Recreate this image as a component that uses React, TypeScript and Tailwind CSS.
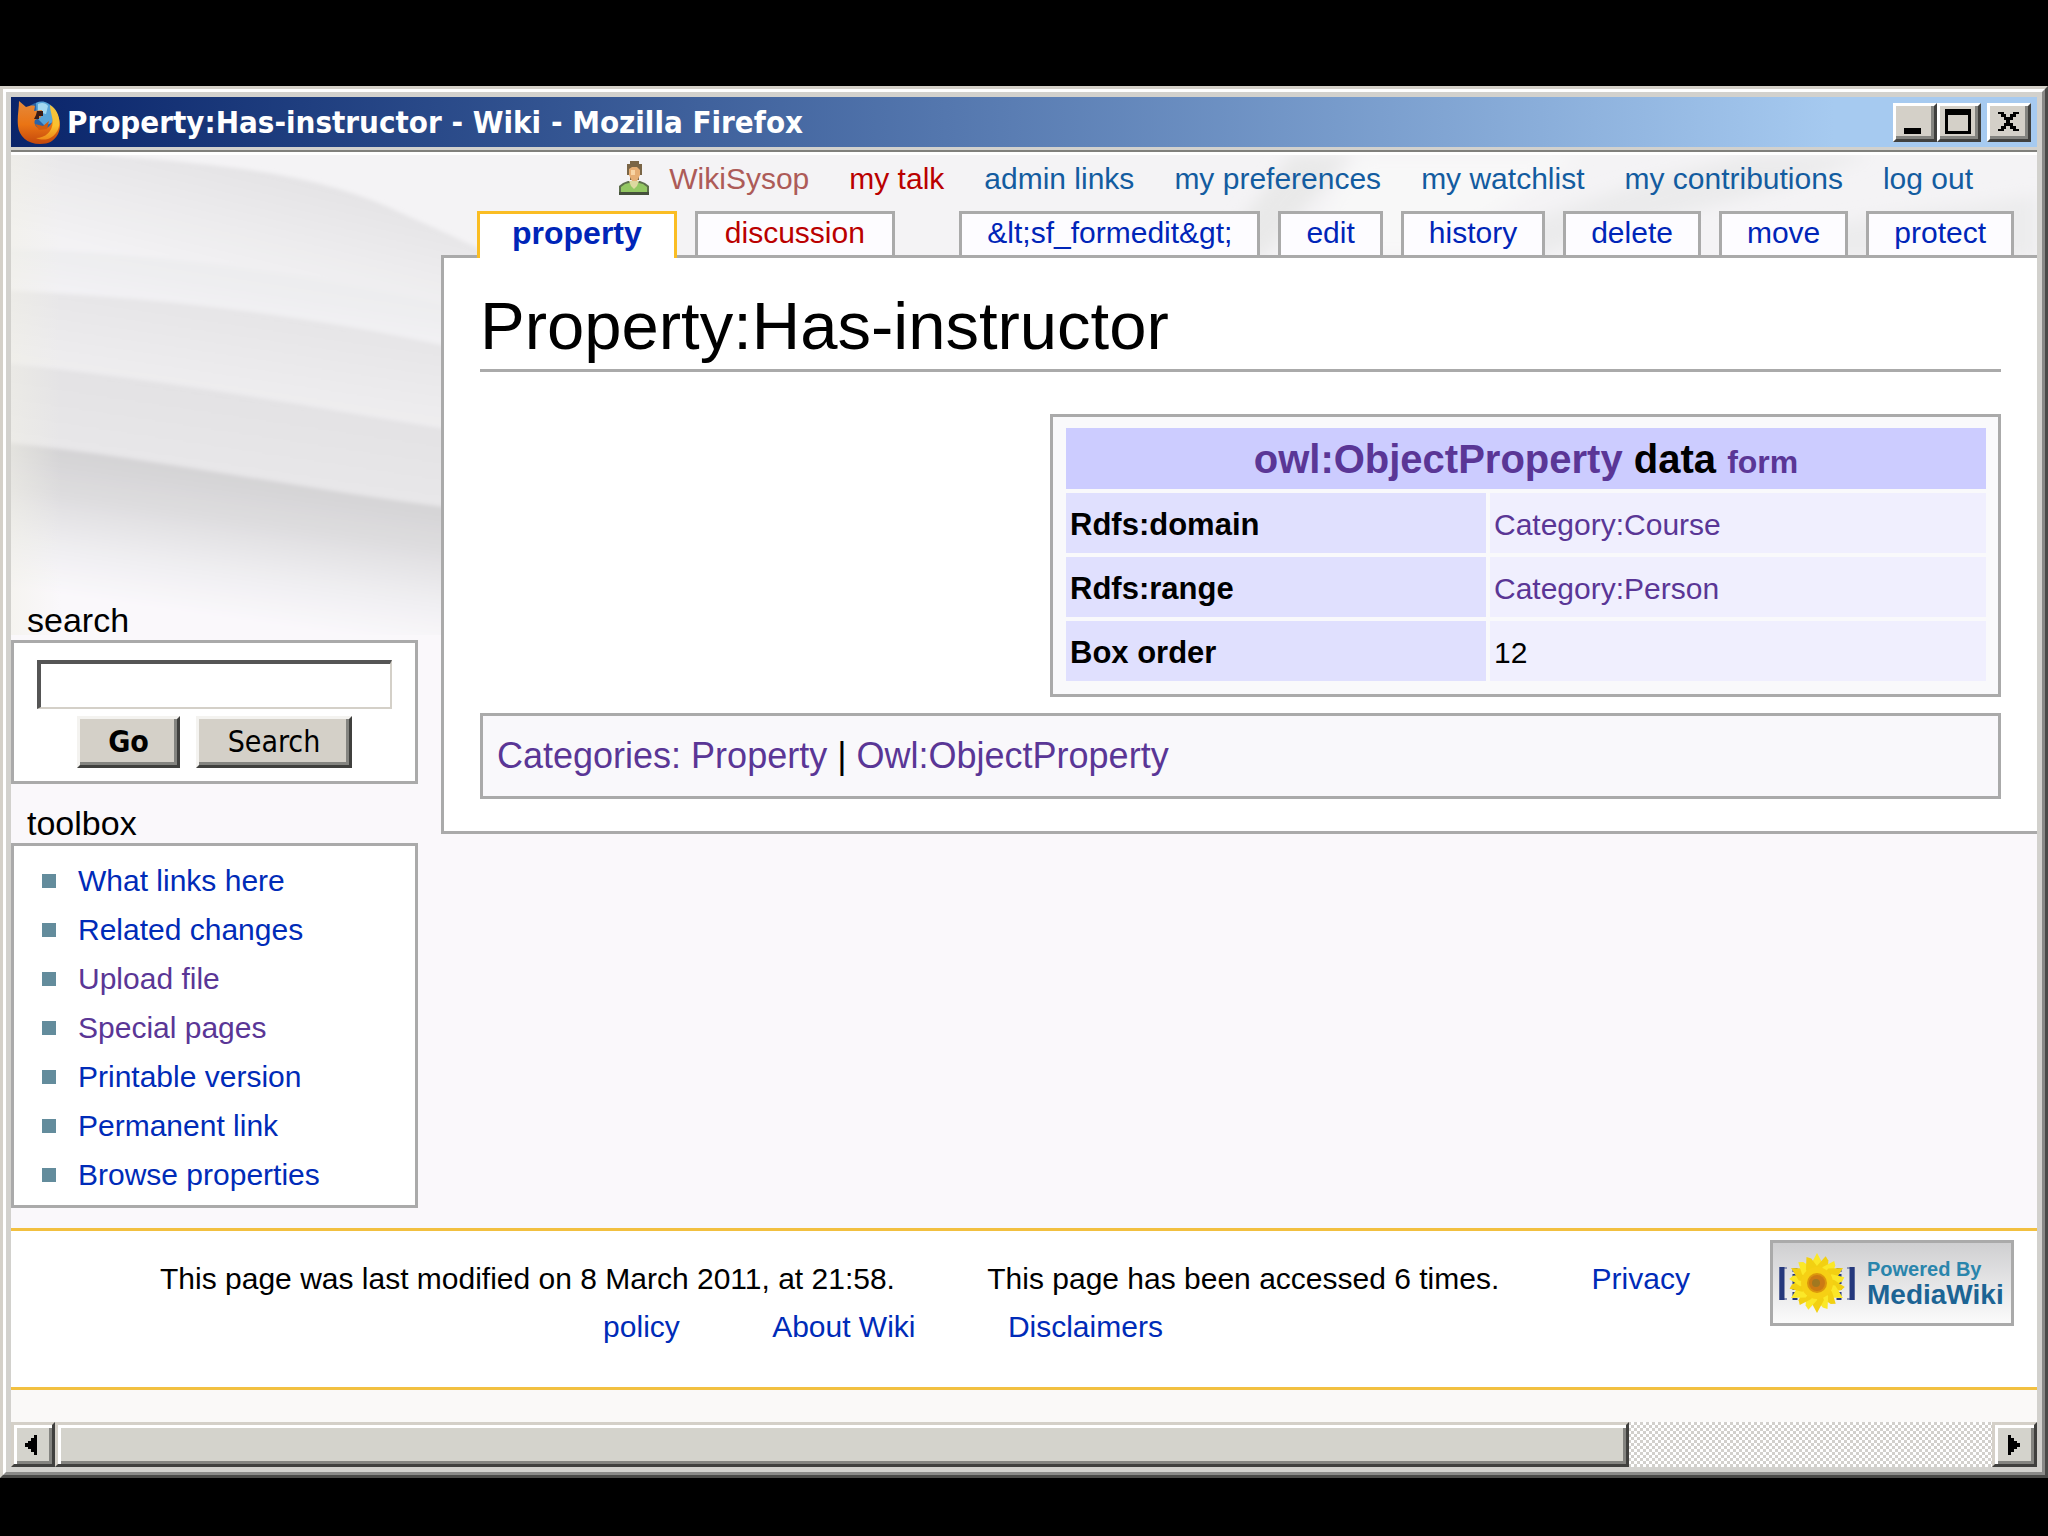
import type { ReactNode } from "react";

const TOOLS = [
  { label: "What links here" },
  { label: "Related changes" },
  { label: "Upload file", visited: true },
  { label: "Special pages", visited: true },
  { label: "Printable version" },
  { label: "Permanent link" },
  { label: "Browse properties" },
];

const ACTIONS = ["&lt;sf_formedit&gt;", "edit", "history", "delete", "move", "protect"];

const PERSONAL = ["admin links", "my preferences", "my watchlist", "my contributions", "log out"];

const ROWS = [
  { name: "Rdfs:domain", value: "Category:Course", link: true },
  { name: "Rdfs:range", value: "Category:Person", link: true },
  { name: "Box order", value: "12", link: false },
];

function FirefoxIcon() {
  return (
    <svg viewBox="0 0 44 44" className="h-11 w-11 shrink-0" aria-hidden="true">
      <defs>
        <linearGradient id="fox" x1="0" y1="0" x2="0" y2="1">
          <stop offset="0" stopColor="#e58a3c" />
          <stop offset="0.55" stopColor="#ea7414" />
          <stop offset="1" stopColor="#c4480c" />
        </linearGradient>
        <linearGradient id="flame" x1="0" y1="0" x2="0" y2="1">
          <stop offset="0" stopColor="#f2c440" />
          <stop offset="0.6" stopColor="#fbc02e" />
          <stop offset="1" stopColor="#ee8a18" />
        </linearGradient>
      </defs>
      <circle cx="24" cy="19" r="17" fill="#2a64a8" />
      <path d="M19 3c6-3 13-1 16 5l1 14-8 4-8-8z" fill="#58a4d8" />
      <path d="M21 4c4-2 8-1 10 2l-2 8-8-2z" fill="#a4d8f0" />
      <path
        d="M2 1l7 6c3-1 6-2 9-1l-1 5 8-1-1 7-6 3c-2 4 2 9 7 9 8 0 13-7 11-19 7 5 9 16 5 24-4 7-9 10-18 10C10 44 2 36 1 26 0 17 2 9 2 1z"
        fill="url(#fox)"
      />
      <path d="M33 5c10 6 12 20 6 28-5 7-13 8-20 5 11 0 19-9 16-21-1-5-2-8-2-12z" fill="url(#flame)" />
      <path d="M20 11h6v5h-4v3h-5l2-4z" fill="#3a1c18" />
      <path d="M18 24l8 2 6-5-2 8-8 1z" fill="#d05c10" />
    </svg>
  );
}

function UserIcon() {
  return (
    <svg viewBox="0 0 30 34" className="h-[34px] w-[30px]" aria-hidden="true">
      <path d="M0 34v-9l4-3 5-2h12l5 2 4 3v9z" fill="#5d6f4c" />
      <path d="M2 31v-5l4-3 4-1h10l4 1 4 3v5z" fill="#93c763" />
      <path d="M0 31h30v3H0z" fill="#45503c" />
      <path d="M10 20h10l-2 5-3 3-3-3z" fill="#dcd9a0" />
      <path d="M8 3h3V0h9v3h3v11h-3v5h-9v-5H8z" fill="#7a6546" />
      <path d="M10 8l3-2h5l3 3v5l-3 6h-5l-3-6z" fill="#e6ae74" />
      <path d="M12 9h4v5h-4z" fill="#f8d4a4" />
    </svg>
  );
}

function Sunflower() {
  const petals = Array.from({ length: 18 }, (_, i) => i * 20);
  return (
    <svg viewBox="0 0 80 60" className="h-15 w-20 shrink-0" aria-hidden="true">
      <path d="M10 15H3v31h7M70 15h7v31h-7" fill="none" stroke="#8e96b8" strokeWidth="2" />
      <path d="M5 14v33M75 14v33" fill="none" stroke="#25387c" strokeWidth="5" />
      <path d="M18 15v32M62 15v32" fill="none" stroke="#25387c" strokeWidth="5" strokeDasharray="4 2" />
      {petals.map((deg, i) => (
        <path
          key={deg}
          d={i % 3 ? "M40 30L34 14l5-12 4 3 3 10z" : "M40 30L33 13l7-13 7 13z"}
          fill={i % 2 ? "#f2d012" : "#fbe828"}
          transform={`rotate(${deg} 40 30)`}
        />
      ))}
      <circle cx="40" cy="30" r="16" fill="#f6d014" />
      <circle cx="40" cy="30" r="10" fill="#dc960c" />
      <circle cx="40" cy="30" r="8" fill="#cc7a14" />
      <circle cx="39" cy="30" r="4" fill="#a07820" />
    </svg>
  );
}

/** Soft paper folds behind the header and sidebar. */
function Backdrop() {
  return (
    <svg viewBox="0 0 2026 480" preserveAspectRatio="none" className="absolute top-0 left-0 h-[480px] w-full" aria-hidden="true">
      <defs>
        <linearGradient id="fold1" gradientUnits="userSpaceOnUse" x1="250" y1="20" x2="225" y2="125">
          <stop offset="0" stopColor="#e5e4e6" />
          <stop offset="1" stopColor="#f3f2f4" />
        </linearGradient>
        <linearGradient id="fold2" gradientUnits="userSpaceOnUse" x1="215" y1="120" x2="208" y2="165">
          <stop offset="0" stopColor="#ededef" />
          <stop offset="1" stopColor="#f3f2f5" />
        </linearGradient>
        <linearGradient id="fold3" gradientUnits="userSpaceOnUse" x1="215" y1="156" x2="203" y2="236">
          <stop offset="0" stopColor="#e6e5e7" />
          <stop offset="1" stopColor="#eeedef" />
        </linearGradient>
        <linearGradient id="fold4" gradientUnits="userSpaceOnUse" x1="215" y1="239" x2="203" y2="319">
          <stop offset="0" stopColor="#e3e2e4" />
          <stop offset="1" stopColor="#e8e7e9" />
        </linearGradient>
        <linearGradient id="fold5" gradientUnits="userSpaceOnUse" x1="215" y1="318" x2="195" y2="460">
          <stop offset="0" stopColor="#d4d3d5" />
          <stop offset="0.3" stopColor="#dddcde" />
          <stop offset="0.7" stopColor="#f0eff2" />
          <stop offset="1" stopColor="#faf8fb" />
        </linearGradient>
        <linearGradient id="edge" x1="0" y1="0" x2="1" y2="0">
          <stop offset="0" stopColor="#f1f0e6" stopOpacity="0.5" />
          <stop offset="1" stopColor="#f1f0e6" stopOpacity="0" />
        </linearGradient>
        <filter id="soft">
          <feGaussianBlur stdDeviation="2" />
        </filter>
        <filter id="softer">
          <feGaussianBlur stdDeviation="8" />
        </filter>
      </defs>
      <rect width="2026" height="104" fill="#f4f3f5" />
      <g filter="url(#soft)">
        <path d="M-10 -8C180 8 290 10 390 58C425 74 450 84 480 100V160H-10z" fill="url(#fold1)" />
        <path d="M-10 94C140 98 290 116 440 150V220H-10z" fill="url(#fold2)" />
        <path d="M-10 135C140 142 290 158 440 192V300H-10z" fill="url(#fold3)" />
        <path d="M-10 208C140 222 290 250 440 275V380H-10z" fill="url(#fold4)" />
        <path d="M-10 287C140 302 290 334 440 353V490H-10z" fill="url(#fold5)" />
      </g>
      <g filter="url(#softer)">
        <path d="M1280 0h60l-90 104h-50z" fill="#e9e9e9" />
        <path d="M1350 0h220l-150 100h-130z" fill="#f8f8f8" />
        <path d="M1740 0h120C1740 50 1640 60 1520 104h-100C1560 50 1640 20 1740 0z" fill="#ebebec" />
        <path d="M2026 40C1900 60 1800 60 1740 104H2026z" fill="#ececed" />
      </g>
      <rect width="50" height="480" fill="url(#edge)" />
    </svg>
  );
}

function TitleBar() {
  const box =
    "grid h-[39px] w-11 place-items-center border-t-3 border-r-3 border-b-3 border-l-3 border-t-white border-r-[#40403e] border-b-[#40403e] border-l-white bg-[#d4d0c8] shadow-[inset_-3px_-3px_0_#848480]";
  return (
    <header className="flex h-[50px] items-center bg-linear-to-r from-[#0a246a] to-[#a6caf0] to-90% pr-1.5 pl-1.5">
      <FirefoxIcon />
      <h1 className="ml-1.5 flex-1 font-['DejaVu_Sans_Condensed','DejaVu_Sans',sans-serif] text-[31px] leading-none font-bold text-white">
        Property:Has-instructor - Wiki - Mozilla Firefox
      </h1>
      <button aria-label="Minimize" className={box}>
        <svg viewBox="0 0 38 33" className="h-[33px] w-[38px]">
          <path d="M8 22h17v6H8z" />
        </svg>
      </button>
      <button aria-label="Maximize" className={box}>
        <svg viewBox="0 0 38 33" className="h-[33px] w-[38px]">
          <path d="M5 3h26v25H5zM8 9v16h20V9z" fillRule="evenodd" />
        </svg>
      </button>
      <button aria-label="Close" className={`${box} ml-1.5`}>
        <svg viewBox="0 0 38 33" className="h-[33px] w-[38px]">
          <path d="M8 6h6v2h2v3h4V8h3V6h6v2h-3v3h-3v3h-3v3h3v3h3v3h3v2h-6v-2h-3v-3h-4v3h-2v2H8v-2h3v-3h3v-3h2v-3h-2v-3h-3V8H8z" />
        </svg>
      </button>
    </header>
  );
}

function Tab({ label, className = "px-[25px] text-[#0025b8]" }: { label: string; className?: string }) {
  return (
    <a href="#" className={`flex h-11 items-center border-x-3 border-t-3 border-[#aaa] bg-[#fdfcff] pb-1 text-[30px] ${className}`}>
      {label}
    </a>
  );
}

function Portlet({ title, children }: { title: string; children: ReactNode }) {
  return (
    <section>
      <h2 className="h-12 pl-4 text-[34px] leading-[56px]">{title}</h2>
      {children}
    </section>
  );
}

function Sidebar() {
  const button =
    "h-[52px] border-t-3 border-r-3 border-b-3 border-l-3 border-t-[#f4f3f0] border-r-[#40403e] border-b-[#40403e] border-l-[#f4f3f0] bg-[#d4d0c8] font-['DejaVu_Sans_Condensed','DejaVu_Sans',sans-serif] text-[30px] leading-none shadow-[inset_-3px_-3px_0_#848480]";
  return (
    <aside className="flex w-[407px] shrink-0 flex-col gap-[11px] pt-[437px]">
      <Portlet title="search">
        <form className="border-3 border-[#aaa] bg-white px-[23px] pt-[17px] pb-[13px]" onSubmit={(e) => e.preventDefault()}>
          <input
            aria-label="Search the wiki"
            className="block h-[49px] w-full border-t-4 border-r-2 border-b-2 border-l-4 border-t-[#555] border-r-[#d4d0c8] border-b-[#d4d0c8] border-l-[#555] bg-white px-2 text-[30px]"
          />
          <div className="mt-[7px] flex justify-center gap-4">
            <button className={`${button} w-[103px] font-bold`}>Go</button>
            <button className={`${button} w-[156px]`}>Search</button>
          </div>
        </form>
      </Portlet>
      <Portlet title="toolbox">
        <ul className="border-3 border-[#aaa] bg-white pt-2.5 pb-1.5">
          {TOOLS.map((t) => (
            <li key={t.label} className="flex h-[49px] items-center gap-[22px] pl-7">
              <span className="size-3.5 bg-[#638c9c]" />
              <a href="#" className={t.visited ? "text-[#5a3696]" : "text-[#002bb8]"}>
                {t.label}
              </a>
            </li>
          ))}
        </ul>
      </Portlet>
    </aside>
  );
}

function FactBox() {
  return (
    <table className="ml-auto w-[951px] table-fixed border-separate border-spacing-1 border-3 border-[#aaa] bg-[#f9f9fb] pt-[7px] pr-2 pb-[9px] pl-[9px] text-left">
      <colgroup>
        <col className="w-[420px]" />
        <col />
      </colgroup>
      <thead>
        <tr className="h-[61px]">
          <th colSpan={2} className="bg-[#ccccff] text-center text-[40px] leading-none">
            <a href="#" className="text-[#5a3696]">owl:ObjectProperty</a> data{" "}
            <a href="#" className="text-[32px] text-[#5a3696]">form</a>
          </th>
        </tr>
      </thead>
      <tbody>
        {ROWS.map((r) => (
          <tr key={r.name} className="h-15">
            <th className="bg-[#e0e0fe] pt-1 pl-1 text-[31px] font-bold">{r.name}</th>
            <td className="bg-[#f0effe] pt-0.5 pl-1">
              {r.link ? <a href="#" className="text-[#5a3696]">{r.value}</a> : r.value}
            </td>
          </tr>
        ))}
      </tbody>
    </table>
  );
}

function Article() {
  return (
    <main className="min-w-0 flex-1">
      <nav aria-label="Personal tools" className="flex h-14 items-center justify-end gap-10 pr-16 pb-2.5 text-[#135ca0]">
        <span className="flex items-center gap-5">
          <UserIcon />
          <a href="#" className="text-[#ad5b58]">WikiSysop</a>
        </span>
        <a href="#" className="text-[#ba0000]">my talk</a>
        {PERSONAL.map((p) => (
          <a key={p} href="#">{p}</a>
        ))}
      </nav>
      <nav aria-label="Page tabs" className="relative z-10 -mb-[3px] flex justify-between pr-[23px] pl-9">
        <div className="flex items-start gap-[18px]">
          <a href="#" className="flex h-[47px] items-center border-x-3 border-t-3 border-[#fabd23] bg-white px-8 pb-1.5 text-[32px] font-bold text-[#0025b8]">
            property
          </a>
          <Tab label="discussion" className="px-[27px] text-[#ba0000]" />
        </div>
        <div className="flex items-start gap-[18px]">
          {ACTIONS.map((a) => (
            <Tab key={a} label={a} />
          ))}
        </div>
      </nav>
      <article className="border-y-3 border-l-3 border-[#aaa] bg-white px-9 pb-8">
        <h1 className="h-[114px] border-b-3 border-[#aaa] pt-[26px] text-[67px] leading-[84px]">Property:Has-instructor</h1>
        <div className="pt-[42px]">
          <FactBox />
        </div>
        <p className="mt-4 flex h-[86px] items-center border-3 border-[#aaa] bg-[#f9f8fb] pl-3.5 text-[36px] whitespace-pre">
          <a href="#" className="text-[#5a3696]">Categories</a>
          <span className="text-[#5a3696]">: </span>
          <a href="#" className="text-[#5a3696]">Property</a>
          <span> | </span>
          <a href="#" className="text-[#5a3696]">Owl:ObjectProperty</a>
        </p>
      </article>
    </main>
  );
}

function Footer() {
  return (
    <footer className="relative mt-5 flex h-[162px] border-y-3 border-[#f2c040] bg-white pr-[23px]">
      <p className="flex-1 pt-6 pr-11 pl-[71px] text-center leading-12 text-black">
        <span className="mx-[42px]">This page was last modified on 8 March 2011, at 21:58.</span>{" "}
        <span className="mx-[42px]">This page has been accessed 6 times.</span>{" "}
        <a href="#" className="mx-[42px] text-[#002bb8]">Privacy policy</a>{" "}
        <a href="#" className="mx-[42px] text-[#002bb8]">About Wiki</a>{" "}
        <a href="#" className="mx-[42px] text-[#002bb8]">Disclaimers</a>
      </p>
      <a
        href="#"
        className="mt-[9px] flex h-[86px] w-[244px] items-center gap-2.5 border-3 border-[#aaa] bg-linear-to-b from-[#cfcfd1] to-[#fbfbfb] pl-1 font-bold"
      >
        <Sunflower />
        <span className="flex flex-col">
          <span className="text-[20px] leading-6 text-[#2a85ac]">Powered By</span>
          <span className="text-[28px] leading-7 text-[#1c6494]">MediaWiki</span>
        </span>
      </a>
    </footer>
  );
}

function ScrollBar() {
  const raised =
    "border-t-3 border-r-3 border-b-3 border-l-3 border-t-[#d4d0c8] border-r-[#40403e] border-b-[#40403e] border-l-[#d4d0c8] bg-[#d4d3cc] shadow-[inset_3px_3px_0_#fff,inset_-3px_-3px_0_#848480]";
  return (
    <div className="flex h-[45px] bg-[repeating-conic-gradient(#d2d0cc_0_25%,#ffffff_0_50%)] bg-size-[6px_6px]">
      <button aria-label="Scroll left" className={`flex w-11 shrink-0 items-center pl-[11px] ${raised}`}>
        <svg viewBox="0 0 12 20" className="h-5 w-3">
          <path d="M12 0v20h-3v-3H6v-3H3v-2H0V8h3V6h3V3h3V0z" />
        </svg>
      </button>
      <div className={`w-[77.7%] ${raised}`} />
      <button aria-label="Scroll right" className={`ml-auto flex w-[45px] shrink-0 items-center pl-[13px] ${raised}`}>
        <svg viewBox="0 0 12 20" className="h-5 w-3">
          <path d="M0 0v20h3v-3h3v-3h3v-2h3V8H9V6H6V3H3V0z" />
        </svg>
      </button>
    </div>
  );
}

export default function App() {
  return (
    <div className="min-h-screen bg-black pt-[86px] pb-14 font-['Liberation_Sans',Arial,sans-serif] text-[30px] text-black">
      <div className="border-t-3 border-r-3 border-b-3 border-l-3 border-t-[#d4d0c8] border-r-[#4a4a48] border-b-[#4a4a48] border-l-[#d4d0c8]">
        <div className="border-t-3 border-r-3 border-b-3 border-l-3 border-t-white border-r-[#8a8a88] border-b-[#8a8a88] border-l-white bg-[#d2d1cd] px-[5px] pt-[5px] pb-[5px]">
          <TitleBar />
          <div className="mt-[3px] border-t-2 border-[#80807c] bg-[#faf8fb]">
            <div className="relative border-t-3 border-white">
              <Backdrop />
              <div className="relative flex gap-[23px]">
                <Sidebar />
                <Article />
              </div>
            </div>
            <Footer />
            <div className="h-8 bg-[#faf9f8]" />
            <ScrollBar />
          </div>
        </div>
      </div>
    </div>
  );
}
